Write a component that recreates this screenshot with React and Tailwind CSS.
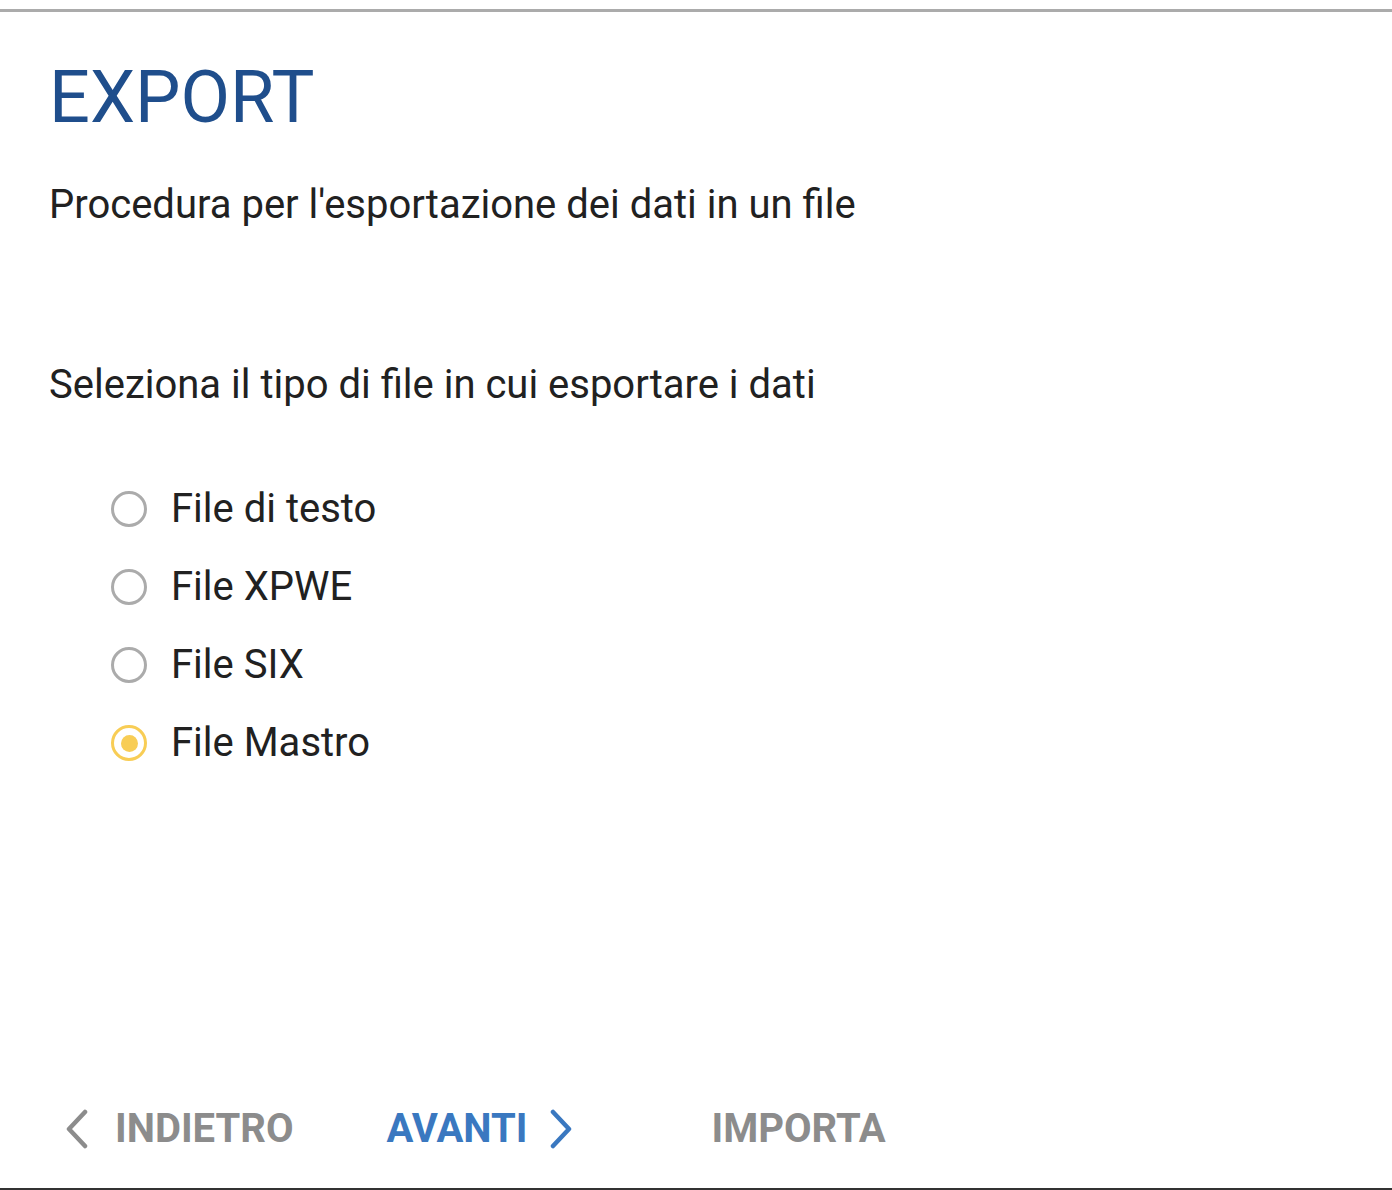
import { useState } from "react";

const options = ["File di testo", "File XPWE", "File SIX", "File Mastro"];

function Radio({ checked }) {
  return (
    <span
      className={`flex h-[36px] w-[36px] shrink-0 items-center justify-center rounded-full border-[3px] ${
        checked ? "border-[#f8cd55]" : "border-[#ababab]"
      }`}
    >
      {checked && <span className="h-[17px] w-[17px] rounded-full bg-[#f8cd55]" />}
    </span>
  );
}

export default function App() {
  const [selected, setSelected] = useState(3);

  return (
    <div className="h-[1190px] w-[1392px] bg-white font-['Roboto',sans-serif] pt-[9px]">
      <div className="flex h-[1181px] flex-col border-t-[3px] border-b-[2px] border-t-[#ababab] border-b-[#333333]">
        <div className="px-[49px]">
          <h1 className="mt-[43px] text-[72px] leading-[86px] text-[#1f4e8c]">EXPORT</h1>
          <p className="mt-[40px] text-[40px] leading-[48px] text-[#212121]">
            Procedura per l'esportazione dei dati in un file
          </p>
          <p className="mt-[132px] text-[40px] leading-[48px] text-[#212121]">
            Seleziona il tipo di file in cui esportare i dati
          </p>
          <div className="mt-[61px] flex flex-col pl-[62px]">
            {options.map((label, i) => (
              <button
                key={label}
                onClick={() => setSelected(i)}
                className="flex h-[78px] items-center gap-[24px] text-left"
              >
                <Radio checked={selected === i} />
                <span className="text-[40px] leading-[48px] text-[#212121]">{label}</span>
              </button>
            ))}
          </div>
        </div>
        <div className="mt-auto mb-[35px] flex items-center pl-[64px]">
          <button className="flex items-center gap-[27px] text-[#8c8c8c]">
            <svg width="24" height="40" viewBox="0 0 24 40" fill="none" stroke="currentColor" strokeWidth="4.5" strokeLinecap="round" strokeLinejoin="round">
              <path d="M21 3 L5 20 L21 37" />
            </svg>
            <span className="text-[40px] font-bold leading-[48px]">INDIETRO</span>
          </button>
          <button className="ml-[93px] flex items-center gap-[22px] text-[#3a78c0]">
            <span className="text-[40px] font-bold leading-[48px]">AVANTI</span>
            <svg width="24" height="40" viewBox="0 0 24 40" fill="none" stroke="currentColor" strokeWidth="4.5" strokeLinecap="round" strokeLinejoin="round">
              <path d="M3 3 L19 20 L3 37" />
            </svg>
          </button>
          <button className="ml-[138px] text-[40px] font-bold leading-[48px] text-[#8c8c8c]">IMPORTA</button>
        </div>
      </div>
    </div>
  );
}
